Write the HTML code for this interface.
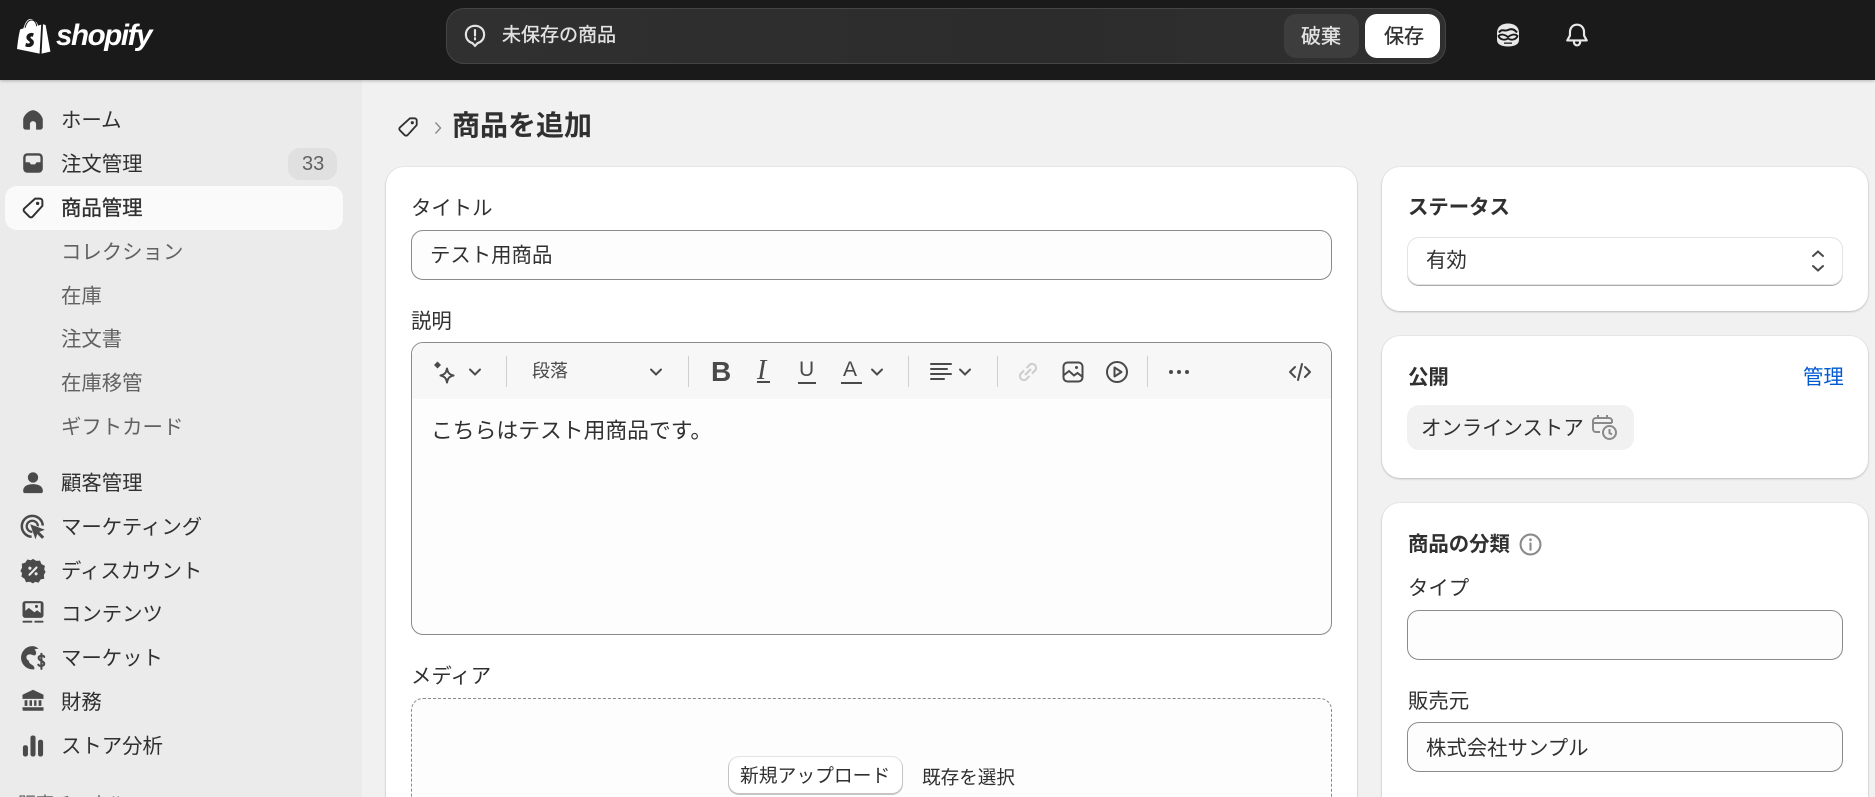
<!DOCTYPE html>
<html lang="ja"><head><meta charset="utf-8"><title>商品を追加</title>
<style>
*{box-sizing:border-box}
html,body{margin:0;padding:0;width:1875px;height:797px;overflow:hidden}
body{background:#f1f1f1;font-family:"Liberation Sans","Noto Sans CJK JP",sans-serif;color:#303030}
#root{position:relative;width:1875px;height:797px;overflow:hidden;background:#f1f1f1}
.a,.t,svg{position:absolute}
.t{font-size:20.4px;line-height:30px;height:30px;white-space:nowrap}
.b{font-weight:700}
.m{-webkit-text-stroke:.35px currentColor}
.s{color:#616161}
.card{position:absolute;background:#fff;border-radius:18px;box-shadow:0 1px 2px rgba(0,0,0,.2),0 0 0 1px rgba(0,0,0,.03)}
.inp{position:absolute;background:#fdfdfd;border:1px solid #8a8a8a;border-radius:12px}
.d{position:absolute;top:356px;height:31px;width:1px;background:#cfcfcf}
.i{left:19px}
</style></head><body><div id="root">

<!-- header -->
<div class="a" style="left:0;top:0;width:1875px;height:80px;background:#1a1a1a;box-shadow:0 1px 3px rgba(0,0,0,.25);z-index:3">
<svg style="left:17px;top:17px" width="34" height="37" viewBox="0 0 34 37"><path fill="#fff" d="M26 7.2 24.6 36.6 33.4 34.6 28.6 8 26 7.2ZM24.2 7.6 21 8.6C20.4 6 19 4 17 3.6 14.6.6 11 1.6 9 5 7.6 7.4 6.8 10 6.4 11.4L3.2 12.4C1.8 17.6 1 23 0 32L22.6 36.6 24.2 7.6Z"/><path fill="#1a1a1a" d="M16.8 16.4C15.4 15.8 13.8 15.7 12.5 16.2 9.8 17.2 8.8 20 9.8 22 10.6 23.6 12.8 24.2 12.9 25.4 13 26.4 11.6 26.8 10 26.2L9.1 25.7 8.2 29.2C10 30.2 12.2 30.3 14 29.6 16.6 28.4 17.4 26 16.6 24 15.8 22.2 13.6 21.6 13.4 20.4 13.4 19.6 14.4 19.2 15.9 19.7L16.8 16.4Z"/><path fill="none" stroke="#1a1a1a" stroke-width="1" d="M8 10.8C9.4 5.6 11.4 3 14.6 3 17.6 3 19.6 6 19.6 9.2"/></svg>
<div class="t b" style="left:56px;top:16px;font-size:29.500px;line-height:40px;height:40px;color:#fff;font-style:italic;letter-spacing:-1.4px;font-family:'Liberation Sans',sans-serif">shopify</div>

<div class="a" style="left:446px;top:8px;width:1000px;height:56px;border-radius:18px;background:linear-gradient(90deg,#303030,#2c2c2c 60%,#303030);border:1px solid #454545"></div>
<svg style="left:462px;top:22px" width="26" height="26" viewBox="0 0 24 24" fill="none" stroke="#e3e3e3" stroke-width="2"><path d="M12 3.500C7 3.500 3.600 7 3.600 11.500 3.600 15.600 6.200 18.600 9.500 19.400L12 22 14.500 19.400C17.800 18.600 20.400 15.600 20.400 11.500 20.400 7 17 3.500 12 3.500Z"/><path d="M12 7.500V12.500M12 15V16" stroke-linecap="round"/></svg>
<div class="t m" style="left:502px;top:21px;font-size:19px;color:#e3e3e3">未保存の商品</div>
<div class="a" style="left:1284px;top:14px;width:75px;height:44px;border-radius:12px;background:#3d3d3d"></div>
<div class="t m" style="left:1301px;top:22px;font-size:20px;color:#e3e3e3">破棄</div>
<div class="a" style="left:1365px;top:14px;width:75px;height:44px;border-radius:12px;background:#fff"></div>
<div class="t m" style="left:1384px;top:22px;font-size:20px;color:#303030">保存</div>
<svg style="left:1495px;top:22px" width="26" height="26" viewBox="0 0 26 26"><path fill="#e8e8e8" d="M13 1.500C7 1.500 2 4.500 2 11V18C2 22 6 24.500 13 24.500S24 22 24 18V11C24 4.500 19 1.500 13 1.500Z"/><path fill="none" stroke="#1a1a1a" stroke-width="2" d="M4 10.500C7 6 9 10 13 8 17 6 20 8 22 10.500"/><path fill="none" stroke="#1a1a1a" stroke-width="1.800" d="M3.500 14C6 11.500 10 12.500 13 15 16 12.500 20 11.500 22.500 14 21 18 16 18.500 13 16.500 10 18.500 5 18 3.500 14Z"/><path fill="#1a1a1a" d="M9 20.500H17V21.800H9Z"/></svg>
<svg style="left:1564px;top:22px" width="26" height="26" viewBox="0 0 24 24" fill="none" stroke="#e8e8e8" stroke-width="2" stroke-linejoin="round"><path d="M12 2.500C8 2.500 5.500 5.500 5.500 9.500V12.500L3 17H21L18.500 12.500V9.500C18.500 5.500 16 2.500 12 2.500Z"/><path d="M9.500 17.500A2.500 2.500 0 0 0 14.500 20 2.500 2.500 0 0 0 14.500 17.500"/></svg>
</div>

<!-- sidebar -->
<div class="a" style="left:0;top:80px;width:362px;height:717px;background:#ebebeb"></div>
<div class="a" style="left:5px;top:186px;width:338px;height:44px;border-radius:12px;background:#fafafa"></div>
<div class="a" style="left:288px;top:148px;width:49px;height:32px;border-radius:12px;background:#e0e0e0"></div>
<div class="t s" style="left:302px;top:149px;font-family:'Liberation Sans',sans-serif;font-size:20px">33</div>

<svg class="i" style="top:106px" width="28" height="28" viewBox="0 0 20 20" fill="#4a4a4a"><path d="M10 3C7 3 3.500 6.500 3 9.500V15C3 16 3.800 16.900 4.800 16.900H7.800V13A2.200 2.200 0 0 1 12.200 13V16.900H15.200C16.200 16.900 17 16 17 15V9.500C16.500 6.500 13 3 10 3Z"/></svg>
<div class="t" style="left:61px;top:106px">ホーム</div>

<svg class="i" style="top:149px" width="28" height="28" viewBox="0 0 20 20" fill="#4a4a4a"><path fill-rule="evenodd" d="M6 3H14A3 3 0 0 1 17 6V14A3 3 0 0 1 14 17H6A3 3 0 0 1 3 14V6A3 3 0 0 1 6 3ZM6 4.700A1.400 1.400 0 0 0 4.700 6V9.500H7.500L8.500 11H11.500L12.500 9.500H15.300V6A1.400 1.400 0 0 0 14 4.700Z"/></svg>
<div class="t" style="left:61px;top:150px">注文管理</div>

<svg class="i" style="top:194px" width="28" height="28" viewBox="0 0 20 20" fill="none" stroke="#303030" stroke-width="1.400" stroke-linejoin="round"><path d="M11.500 3.300H15A1.700 1.700 0 0 1 16.700 5V8.500L9.700 16.200A1.600 1.600 0 0 1 7.400 16.200L3.800 12.600A1.600 1.600 0 0 1 3.800 10.300Z"/><circle cx="13.300" cy="6.700" r="1.200" fill="#303030" stroke="none"/></svg>
<div class="t m" style="left:61px;top:194px">商品管理</div>

<div class="t s" style="left:61px;top:238px">コレクション</div>
<div class="t s" style="left:61px;top:282px">在庫</div>
<div class="t s" style="left:61px;top:325px">注文書</div>
<div class="t s" style="left:61px;top:369px">在庫移管</div>
<div class="t s" style="left:61px;top:413px">ギフトカード</div>

<svg class="i" style="top:469px" width="28" height="28" viewBox="0 0 20 20" fill="#4a4a4a"><circle cx="10" cy="6" r="3.700"/><path d="M3 15C3.400 12 6.500 10.800 10 10.800S16.600 12 17 15V16.200C17 16.800 16.500 17.200 16 17.200H4C3.500 17.200 3 16.800 3 16.200Z"/></svg>
<div class="t" style="left:61px;top:469px">顧客管理</div>

<svg class="i" style="top:513px" width="28" height="28" viewBox="0 0 20 20" fill="none" stroke="#4a4a4a" stroke-width="1.800"><path d="M9 17A7.500 7.500 0 1 1 17 9"/><path d="M9.500 13.500A4 4 0 1 1 13.500 9.500" stroke-width="1.600"/><path fill="#4a4a4a" stroke="none" d="M8 8 18.500 12 14.500 13.500 18 17 16.500 18.500 13 15 11.800 18.800Z"/></svg>
<div class="t" style="left:61px;top:513px">マーケティング</div>

<svg class="i" style="top:557px" width="28" height="28" viewBox="0 0 20 20" fill="#4a4a4a"><path d="M10 1.300 12.300 2.800 15 2.600 16 5 18.500 6.300 18 9 19 10.500 17.800 12.800 18 15.500 15.500 16 14 18.300 11.500 17.800 10 18.800 7.700 17.700 5 18 4 15.500 1.700 14 2.200 11.500 1 10 2.200 7.500 2 4.800 4.500 4 6 1.800 8.500 2.300Z"/><path stroke="#ebebeb" stroke-width="1.500" stroke-linecap="round" d="M7.500 12.700 12.500 7.500"/><circle cx="7.800" cy="8" r="1.100" fill="#ebebeb"/><circle cx="12.200" cy="12" r="1.100" fill="#ebebeb"/></svg>
<div class="t" style="left:61px;top:557px">ディスカウント</div>

<svg class="i" style="top:599px" width="28" height="28" viewBox="0 0 20 20" fill="#4a4a4a"><path fill-rule="evenodd" d="M4.500 1.500H15.500A2 2 0 0 1 17.500 3.500V11.500A2 2 0 0 1 15.500 13.500H4.500A2 2 0 0 1 2.500 11.500V3.500A2 2 0 0 1 4.500 1.500ZM4.500 3V8.500L7 6.300 11 9.500 13 8 15.500 10V3ZM12.500 4.200A1.100 1.100 0 1 0 12.500 6.400 1.100 1.100 0 0 0 12.500 4.200Z"/><rect x="2.500" y="15.500" width="7" height="1.400" rx=".5"/><rect x="11" y="15.500" width="6.500" height="1.400" rx=".5"/></svg>
<div class="t" style="left:61px;top:600px">コンテンツ</div>

<svg class="i" style="top:644px" width="28" height="28" viewBox="0 0 20 20" fill="#4a4a4a"><path d="M9.500 1.500A8.300 8.300 0 1 0 11 18 C11.500 14.500 7 15 7 12 5 11 4.500 8 7 7.500 9 7 10 8.500 11.500 8 13 7 12 4.500 11 4 12 3.500 13 3.200 14.200 3.500 12.800 2.200 11.200 1.500 9.500 1.500Z"/><path fill="none" stroke="#4a4a4a" stroke-width="1.500" stroke-linecap="round" d="M18 9.200C17.500 8 14 8 14 10S18 12 18 14 14.500 16 13.800 14.800M16 7V17.800"/></svg>
<div class="t" style="left:61px;top:644px">マーケット</div>

<svg class="i" style="top:687px" width="28" height="28" viewBox="0 0 20 20" fill="#4a4a4a"><path d="M10 2 17.500 5.500V8.500H2.500V5.500ZM4 9.500H6V13.500H4ZM7.500 9.500H9.300V13.500H7.500ZM10.800 9.500H12.500V13.500H10.800ZM14 9.500H16V13.500H14ZM2.500 14.500H17.500V17H3.500A1 1 0 0 1 2.500 16Z"/></svg>
<div class="t" style="left:61px;top:688px">財務</div>

<svg class="i" style="top:732px" width="28" height="28" viewBox="0 0 20 20" fill="#4a4a4a"><rect x="2.800" y="9.500" width="3.600" height="8" rx="1.500"/><rect x="8.200" y="2.500" width="3.600" height="15" rx="1.500"/><rect x="13.600" y="5.500" width="3.600" height="12" rx="1.500"/></svg>
<div class="t" style="left:61px;top:732px">ストア分析</div>

<div class="a" style="left:18px;top:789px;width:120px;height:8px;overflow:hidden"><div class="t s" style="left:0;top:0;font-size:18px">販売チャネル</div></div>

<!-- breadcrumb -->
<svg style="left:395px;top:114px" width="26" height="26" viewBox="0 0 20 20" fill="none" stroke="#303030" stroke-width="1.400" stroke-linejoin="round"><path d="M11.500 3.300H15A1.700 1.700 0 0 1 16.700 5V8.500L9.700 16.200A1.600 1.600 0 0 1 7.400 16.200L3.800 12.600A1.600 1.600 0 0 1 3.800 10.300Z"/><circle cx="13.300" cy="6.700" r="1.200" fill="#303030" stroke="none"/></svg>
<svg style="left:432px;top:120px" width="12" height="16" viewBox="0 0 12 16" fill="none" stroke="#8a8a8a" stroke-width="1.400"><path d="M3.500 2.500 8.500 8 3.500 13.500"/></svg>
<div class="t b" style="left:452px;top:106px;font-size:28px;line-height:40px;height:40px">商品を追加</div>

<!-- main card -->
<div class="card" style="left:386px;top:167px;width:971px;height:630px;border-radius:18px 18px 0 0"></div>
<div class="t" style="left:411px;top:194px">タイトル</div>
<div class="inp" style="left:411px;top:230px;width:921px;height:50px"></div>
<div class="t" style="left:430px;top:241px">テスト用商品</div>
<div class="t" style="left:411px;top:307px">説明</div>
<div class="inp" style="left:411px;top:342px;width:921px;height:293px;overflow:hidden"><div style="height:56px;background:#f7f7f7"></div></div>

<svg style="left:432px;top:360px" width="26" height="26" viewBox="0 0 26 26"><path fill="none" stroke="#4a4a4a" stroke-width="2" stroke-linejoin="round" d="M15 8.500C15.800 12.500 17 14.500 21.500 15.500 17 16.500 15.800 18.500 15 22.500 14.200 18.500 13 16.500 8.500 15.500 13 14.500 14.200 12.500 15 8.500Z"/><path fill="#4a4a4a" d="M5.500 1.500 9 5 5.500 8.500 2 5Z"/></svg>
<svg style="left:468px;top:365px" width="14" height="14" viewBox="0 0 14 14" fill="none" stroke="#4a4a4a" stroke-width="2" stroke-linecap="round"><path d="M2 4.500 7 9.500 12 4.500"/></svg>
<div class="d" style="left:506px"></div>
<div class="t" style="left:532px;top:356px;font-size:18px;color:#4a4a4a">段落</div>
<svg style="left:649px;top:365px" width="14" height="14" viewBox="0 0 14 14" fill="none" stroke="#4a4a4a" stroke-width="2" stroke-linecap="round"><path d="M2 4.500 7 9.500 12 4.500"/></svg>
<div class="d" style="left:688px"></div>
<div class="t b" style="left:711px;top:357px;font-size:28px;color:#4a4a4a;font-family:'Liberation Sans',sans-serif">B</div>
<div class="t" style="left:757px;top:356px;font-size:28px;color:#4a4a4a;font-style:italic;font-family:'Liberation Serif',serif">I</div>
<div class="a" style="left:757px;top:381px;width:13px;height:2px;background:#4a4a4a"></div>
<div class="t" style="left:799px;top:355px;font-size:21px;color:#4a4a4a;font-family:'Liberation Sans',sans-serif">U</div>
<div class="a" style="left:798px;top:382px;width:18px;height:2px;background:#4a4a4a"></div>
<div class="t" style="left:843px;top:355px;font-size:21px;color:#4a4a4a;font-family:'Liberation Sans',sans-serif">A</div>
<div class="a" style="left:841px;top:382px;width:21px;height:2px;background:#4a4a4a"></div>
<svg style="left:870px;top:365px" width="14" height="14" viewBox="0 0 14 14" fill="none" stroke="#4a4a4a" stroke-width="2" stroke-linecap="round"><path d="M2 4.500 7 9.500 12 4.500"/></svg>
<div class="d" style="left:908px"></div>
<svg style="left:929px;top:361px" width="24" height="22" viewBox="0 0 24 22" stroke="#4a4a4a" stroke-width="2" stroke-linecap="round"><path d="M2 3H22M2 8H18M2 13H22M2 18H15"/></svg>
<svg style="left:958px;top:365px" width="14" height="14" viewBox="0 0 14 14" fill="none" stroke="#4a4a4a" stroke-width="2" stroke-linecap="round"><path d="M2 4.500 7 9.500 12 4.500"/></svg>
<div class="d" style="left:997px"></div>
<svg style="left:1016px;top:360px" width="24" height="24" viewBox="0 0 24 24" fill="none" stroke="#cccccc" stroke-width="2"><path d="M10.500 8 14 4.500A4 4 0 0 1 19.500 10L16 13.500M13.500 16 10 19.500A4 4 0 0 1 4.500 14L8 10.500M9 15 15 9"/></svg>
<svg style="left:1062px;top:361px" width="22" height="22" viewBox="0 0 22 22" fill="none" stroke="#4a4a4a" stroke-width="2"><rect x="1.500" y="1.500" width="19" height="19" rx="4"/><path d="M2 14 7 10 12 14.500 15.500 12 20 15.500"/><circle cx="14.500" cy="6.500" r="1.500" fill="#4a4a4a" stroke="none"/></svg>
<svg style="left:1105px;top:360px" width="24" height="24" viewBox="0 0 24 24" fill="none" stroke="#4a4a4a" stroke-width="2" stroke-linejoin="round"><circle cx="12" cy="12" r="10"/><path d="M9.500 7.500 16.500 12 9.500 16.500Z"/></svg>
<div class="d" style="left:1147px"></div>
<svg style="left:1167px;top:366px" width="24" height="12" viewBox="0 0 24 12" fill="#4a4a4a"><circle cx="4" cy="6" r="2"/><circle cx="12" cy="6" r="2"/><circle cx="20" cy="6" r="2"/></svg>
<svg style="left:1288px;top:361px" width="24" height="22" viewBox="0 0 24 22" fill="none" stroke="#4a4a4a" stroke-width="2" stroke-linecap="round" stroke-linejoin="round"><path d="M7 6 2 11 7 16M17 6 22 11 17 16M14 3 10 19"/></svg>

<div class="t" style="left:431px;top:416px;font-size:21.800px">こちらはテスト用商品です。</div>

<div class="t" style="left:411px;top:662px">メディア</div>
<div class="a" style="left:411px;top:698px;width:921px;height:99px;background:#fdfdfd;border:1px dashed #8a8a8a;border-bottom:0;border-radius:12px 12px 0 0"></div>
<div class="a" style="left:729px;top:757px;width:173px;height:36px;background:#fff;border-radius:10px;box-shadow:0 1px 0 1px #c4c4c4,0 0 0 1px #e3e3e3"></div>
<div class="t" style="left:740px;top:761px;font-size:18.800px">新規アップロード</div>
<div class="t" style="left:922px;top:763px;font-size:18.600px">既存を選択</div>

<!-- status -->
<div class="card" style="left:1382px;top:167px;width:486px;height:144px"></div>
<div class="t b" style="left:1408px;top:193px">ステータス</div>
<div class="a" style="left:1407px;top:237px;width:436px;height:48px;background:#fff;border-radius:12px;box-shadow:inset 0 0 0 1px #e3e3e3,0 1px 0 #aaa"></div>
<div class="t" style="left:1426px;top:246px">有効</div>
<svg style="left:1810px;top:249px" width="16" height="24" viewBox="0 0 16 24" fill="none" stroke="#4a4a4a" stroke-width="2" stroke-linecap="round"><path d="M3 7 8 2.500 13 7M3 17 8 21.500 13 17"/></svg>

<!-- publish -->
<div class="card" style="left:1382px;top:336px;width:486px;height:142px"></div>
<div class="t b" style="left:1408px;top:363px">公開</div>
<div class="t" style="left:1803px;top:363px;color:#005bd3">管理</div>
<div class="a" style="left:1407px;top:405px;width:227px;height:45px;border-radius:12px;background:#f1f1f1"></div>
<div class="t" style="left:1421px;top:414px">オンラインストア</div>
<svg style="left:1591px;top:414px" width="27" height="27" viewBox="0 0 27 27" fill="none" stroke="#8a8a8a" stroke-width="2"><path d="M9 18H5A3 3 0 0 1 2 15V7A3 3 0 0 1 5 4H18A3 3 0 0 1 21 7V9M2 9H21M7 1V5M16 1V5"/><circle cx="18.500" cy="18.500" r="6.500"/><path d="M18.500 15V19L21 20.500"/></svg>

<!-- classification -->
<div class="card" style="left:1382px;top:503px;width:486px;height:294px;border-radius:18px 18px 0 0"></div>
<div class="t b" style="left:1408px;top:530px">商品の分類</div>
<svg style="left:1519px;top:533px" width="23" height="23" viewBox="0 0 22 22" fill="none" stroke="#8a8a8a" stroke-width="2"><circle cx="11" cy="11" r="9.500"/><path d="M11 10V16" stroke-linecap="round"/><circle cx="11" cy="6.500" r="1.300" fill="#8a8a8a" stroke="none"/></svg>
<div class="t" style="left:1408px;top:574px">タイプ</div>
<div class="inp" style="left:1407px;top:610px;width:436px;height:50px"></div>
<div class="t" style="left:1408px;top:687px">販売元</div>
<div class="inp" style="left:1407px;top:722px;width:436px;height:50px"></div>
<div class="t" style="left:1426px;top:734px">株式会社サンプル</div>

</div></body></html>
